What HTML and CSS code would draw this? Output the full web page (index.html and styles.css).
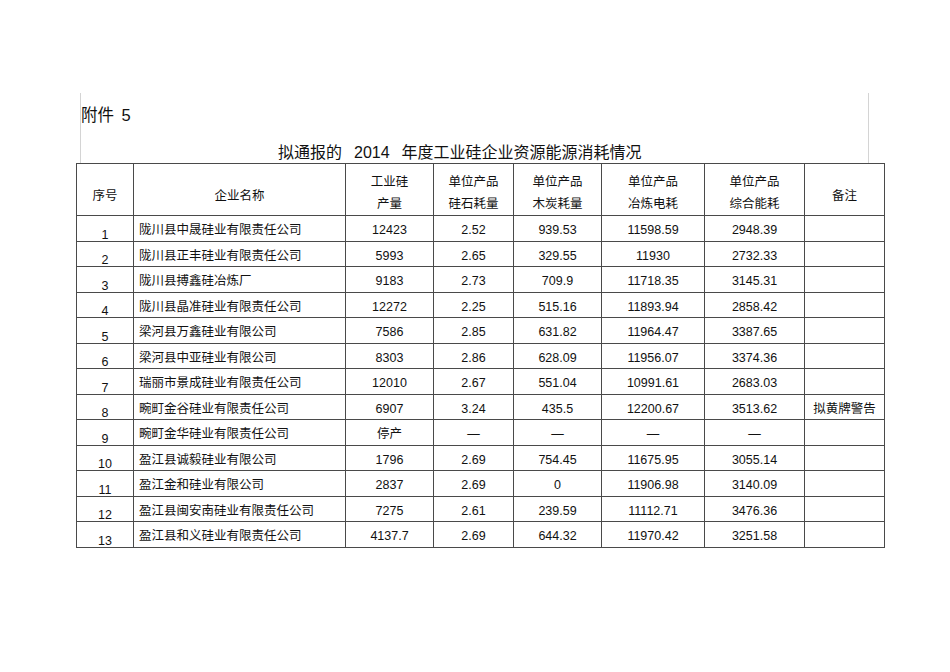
FILE: index.html
```html
<!DOCTYPE html>
<html lang="zh">
<head>
<meta charset="utf-8">
<title>附件 5</title>
<link rel="stylesheet" href="styles.css">
</head>
<body>
<div class="sheet">
  <div class="intro">
    <div class="annex">附件 <span class="num">5</span></div>
    <div class="title">拟通报的<span class="yr">2014</span>年度工业硅企业资源能源消耗情况</div>
  </div>
  <table class="data">
    <colgroup>
      <col class="c1"><col class="c2"><col class="c3"><col class="c4"><col class="c5"><col class="c6"><col class="c7"><col class="c8">
    </colgroup>
    <thead>
      <tr>
        <th class="single">序号</th>
        <th class="single">企业名称</th>
        <th>工业硅<br>产量</th>
        <th>单位产品<br>硅石耗量</th>
        <th>单位产品<br>木炭耗量</th>
        <th>单位产品<br>冶炼电耗</th>
        <th>单位产品<br>综合能耗</th>
        <th class="single">备注</th>
      </tr>
    </thead>
    <tbody>
      <tr><td class="idx">1</td><td class="name">陇川县中晟硅业有限责任公司</td><td>12423</td><td>2.52</td><td>939.53</td><td>11598.59</td><td>2948.39</td><td></td></tr>
      <tr><td class="idx">2</td><td class="name">陇川县正丰硅业有限责任公司</td><td>5993</td><td>2.65</td><td>329.55</td><td>11930</td><td>2732.33</td><td></td></tr>
      <tr><td class="idx">3</td><td class="name">陇川县搏鑫硅冶炼厂</td><td>9183</td><td>2.73</td><td>709.9</td><td>11718.35</td><td>3145.31</td><td></td></tr>
      <tr><td class="idx">4</td><td class="name">陇川县晶准硅业有限责任公司</td><td>12272</td><td>2.25</td><td>515.16</td><td>11893.94</td><td>2858.42</td><td></td></tr>
      <tr><td class="idx">5</td><td class="name">梁河县万鑫硅业有限公司</td><td>7586</td><td>2.85</td><td>631.82</td><td>11964.47</td><td>3387.65</td><td></td></tr>
      <tr><td class="idx">6</td><td class="name">梁河县中亚硅业有限公司</td><td>8303</td><td>2.86</td><td>628.09</td><td>11956.07</td><td>3374.36</td><td></td></tr>
      <tr><td class="idx">7</td><td class="name">瑞丽市景成硅业有限责任公司</td><td>12010</td><td>2.67</td><td>551.04</td><td>10991.61</td><td>2683.03</td><td></td></tr>
      <tr><td class="idx">8</td><td class="name">畹町金谷硅业有限责任公司</td><td>6907</td><td>3.24</td><td>435.5</td><td>12200.67</td><td>3513.62</td><td>拟黄牌警告</td></tr>
      <tr><td class="idx">9</td><td class="name">畹町金华硅业有限责任公司</td><td>停产</td><td>—</td><td>—</td><td>—</td><td>—</td><td></td></tr>
      <tr><td class="idx">10</td><td class="name">盈江县诚毅硅业有限公司</td><td>1796</td><td>2.69</td><td>754.45</td><td>11675.95</td><td>3055.14</td><td></td></tr>
      <tr><td class="idx">11</td><td class="name">盈江金和硅业有限公司</td><td>2837</td><td>2.69</td><td>0</td><td>11906.98</td><td>3140.09</td><td></td></tr>
      <tr><td class="idx">12</td><td class="name">盈江县闽安南硅业有限责任公司</td><td>7275</td><td>2.61</td><td>239.59</td><td>11112.71</td><td>3476.36</td><td></td></tr>
      <tr><td class="idx">13</td><td class="name">盈江县和义硅业有限责任公司</td><td>4137.7</td><td>2.69</td><td>644.32</td><td>11970.42</td><td>3251.58</td><td></td></tr>
    </tbody>
  </table>
</div>
</body>
</html>
```

FILE: styles.css
```css
html, body {
  margin: 0;
  padding: 0;
  background: #ffffff;
}

body {
  font-family: "Liberation Sans", "Noto Sans CJK SC", sans-serif;
  color: #111;
}

.sheet {
  padding-top: 93px;
  padding-left: 76px;
}

.intro {
  margin-left: 4px;
  width: 789px;
  height: 70px;
  border-left: 1px solid #d4d4d4;
  border-right: 1px solid #d4d4d4;
  box-sizing: border-box;
  display: flex;
  flex-direction: column;
}

.annex {
  font-size: 16.5px;
  line-height: 20px;
  margin-top: 12px;
}

.annex .num {
  margin-left: 3px;
}

.title {
  font-size: 16px;
  line-height: 20px;
  margin-top: 18px;
  padding-left: 197px;
  white-space: nowrap;
}

.title .yr {
  margin: 0 12px;
}

.data {
  border-collapse: collapse;
  table-layout: fixed;
  width: 808px;
  font-size: 12.5px;
}

.c1 { width: 57px; }
.c2 { width: 212px; }
.c3 { width: 88px; }
.c4 { width: 80px; }
.c5 { width: 88px; }
.c6 { width: 103px; }
.c7 { width: 100px; }
.c8 { width: 80px; }

.data thead tr {
  height: 51px;
}

.data tbody tr {
  height: 25.5px;
}

.data th,
.data td {
  border: 1px solid #4a4a4a;
  padding: 0;
  text-align: center;
  white-space: nowrap;
}

.data th {
  font-weight: normal;
  line-height: 22px;
  padding-top: 7px;
  vertical-align: middle;
}

.data th.single {
  padding-top: 13px;
}

.data td {
  line-height: 16px;
  padding-top: 4px;
  vertical-align: middle;
}

.data td.idx {
  vertical-align: bottom;
  padding-top: 0;
  line-height: 12px;
}

.data td.name {
  text-align: left;
  padding-left: 5px;
}
```
